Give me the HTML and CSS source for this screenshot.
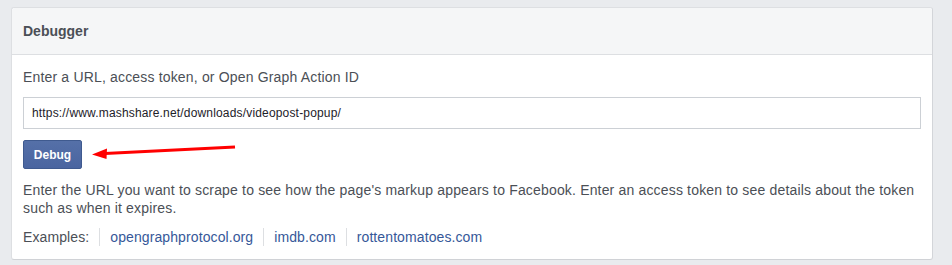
FILE: index.html
```html
<!DOCTYPE html>
<html lang="en">
<head>
  <meta charset="UTF-8">
  <title>Sharing Debugger</title>
  <link rel="stylesheet" href="styles.css">
</head>
<body>
  <div class="panel">
    <div class="panel-header">Debugger</div>
    <div class="panel-body">
      <label class="label" for="url">Enter a URL, access token, or Open Graph Action ID</label>
      <input id="url" class="url-input" type="text" value="https://www.mashshare.net/downloads/videopost-popup/">
      <div class="actions">
        <button class="btn">Debug</button>
        <svg class="arrow" width="150" height="16" viewBox="0 0 150 16">
          <path d="M144 3 L14 9.5" stroke="#f00" stroke-width="3" fill="none"/>
          <path d="M1 10.5 L16 4.5 L15.5 15 Z" fill="#f00"/>
        </svg>
      </div>
      <p class="help">Enter the URL you want to scrape to see how the page's markup appears to Facebook. Enter an access token to see details about the token such as when it expires.</p>
      <div class="examples">
        <span class="ex-label">Examples:</span>
        <a href="#">opengraphprotocol.org</a>
        <a href="#">imdb.com</a>
        <a href="#">rottentomatoes.com</a>
      </div>
    </div>
  </div>
</body>
</html>
```

FILE: styles.css
```css
* {
  margin: 0;
  padding: 0;
  box-sizing: border-box;
}

body {
  font-family: 'Liberation Sans', Arial, sans-serif;
  background-color: #e9ebee;
  color: #4b4f56;
  padding: 7px 18px 0 11px;
}

.panel {
  width: 922px;
  height: 253px;
  background-color: #fff;
  border: 1px solid #dddfe2;
  border-right-color: #d3d5d9;
  border-bottom-color: #d0d2d6;
  border-radius: 3px;
}

.panel-header {
  height: 47px;
  background-color: #f5f6f7;
  border-bottom: 1px solid #dddfe2;
  padding: 15px 0 0 11px;
  font-size: 14px;
  font-weight: bold;
  color: #4b4f56;
  border-radius: 3px 3px 0 0;
}

.panel-body {
  padding: 13px 11px 0 11px;
  letter-spacing: 0.17px;
}

.label {
  display: block;
  font-size: 14px;
  line-height: 18px;
}

.url-input {
  display: block;
  width: 898px;
  height: 32px;
  margin-top: 11px;
  border: 1px solid #ccd0d5;
  padding: 0 8px;
  font-family: 'Liberation Sans', Arial, sans-serif;
  font-size: 12px;
  letter-spacing: 0.17px;
  color: #1d2129;
  outline: none;
}

.actions {
  display: flex;
  align-items: center;
  margin-top: 11px;
}

.btn {
  width: 59px;
  height: 29px;
  background: linear-gradient(#5570a8, #4a65a0);
  border: 1px solid #3f5a8f;
  border-radius: 2px;
  color: #fff;
  font-family: 'Liberation Sans', Arial, sans-serif;
  font-size: 12px;
  font-weight: bold;
  cursor: pointer;
}

.arrow {
  margin-left: 9px;
  margin-top: -6px;
}

.help {
  margin-top: 12px;
  font-size: 14px;
  line-height: 18px;
  width: 895px;
}

.examples {
  display: flex;
  align-items: center;
  margin-top: 11px;
  font-size: 14px;
  line-height: 18px;
  letter-spacing: 0.1px;
}

.examples a {
  color: #365899;
  text-decoration: none;
  border-left: 1px solid #dddfe2;
  padding-left: 10px;
  margin-left: 10px;
}
```
